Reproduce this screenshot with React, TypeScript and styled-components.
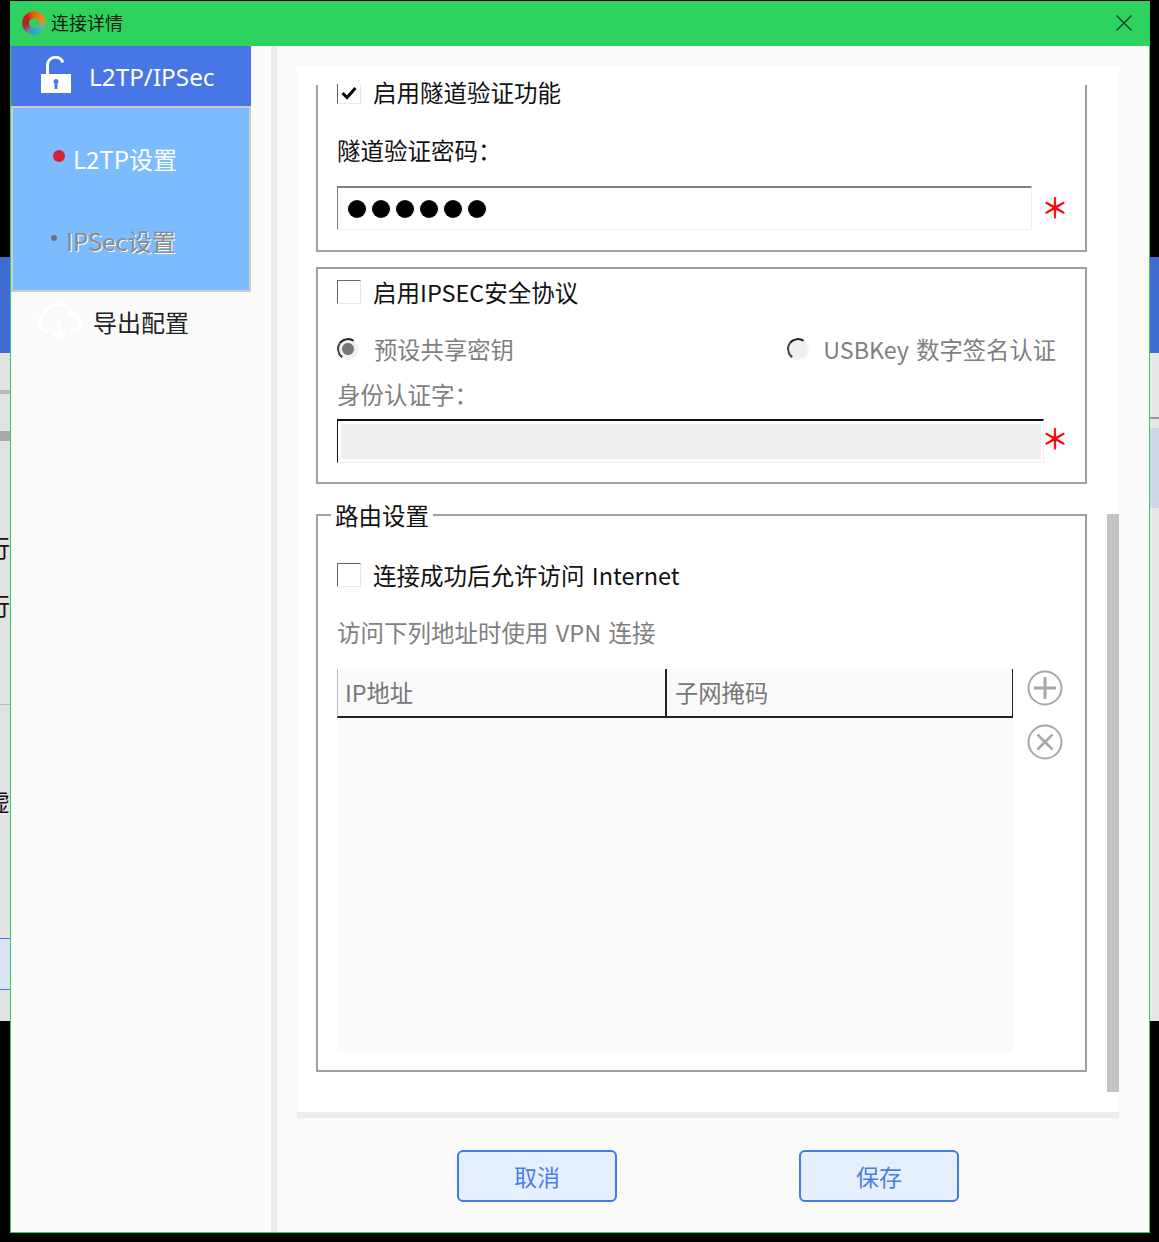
import React from 'react'
import styled, { createGlobalStyle } from 'styled-components'

const GlobalStyle = createGlobalStyle`
  html, body {
    margin: 0;
    padding: 0;
    background: #000;
  }
  body {
    font-family: "Noto Sans CJK SC", "Noto Sans", sans-serif;
    color: #111;
  }
`

const Page = styled.div`
  position: relative;
  width: 1159px;
  height: 1242px;
  overflow: hidden;
  padding: 1px 9px 9px 10px;
  box-sizing: border-box;
`

// the desktop that shows either side of the dialog
const Desktop = styled.div`
  position: absolute;
  inset: 0;
  display: flex;
  flex-direction: column;
`

const DesktopGap = styled.div`
  height: 257px;
  background: #000;
`

const DesktopBanner = styled.div`
  height: 96px;
  background: #3f6bd0;
`

const DesktopList = styled.div`
  height: 668px;
  background: linear-gradient(90deg, #e2e2e2, #f4f4f4 50%, #f4f4f4 96%, #e6e6e6 100%);
  position: relative;
`

const DesktopRule = styled.div<{ $side: 'left' | 'right'; $top: number; $h?: number; $color?: string }>`
  position: absolute;
  ${({ $side }) => $side}: 0;
  width: 12px;
  top: ${({ $top }) => $top}px;
  height: ${({ $h }) => $h ?? 1}px;
  background: ${({ $color }) => $color ?? '#b8b8b8'};
`

const DesktopGlyph = styled.span<{ $top: number }>`
  position: absolute;
  left: -14px;
  top: ${({ $top }) => $top}px;
  font-size: 24px;
  line-height: 24px;
  color: #111;
`

const Window = styled.div`
  position: relative;
  width: 1140px;
  height: 1232px;
  background: #fafafa;
  border: 1px solid #2ed35f;
  border-top: none;
  box-sizing: border-box;
  display: flex;
  flex-direction: column;
`

const TitleBar = styled.header`
  height: 45px;
  flex: none;
  box-sizing: border-box;
  background: #2ed35f;
  display: flex;
  align-items: center;
  padding: 0 17px 1px 12px;
  gap: 5px;
  margin: 0 -1px;
`

const Logo = styled.span`
  width: 24px;
  height: 24px;
  flex: none;
  border-radius: 50%;
  background: conic-gradient(
    #e8620f 0deg,
    #ef8a1e 70deg,
    #62b69a 115deg,
    #27a6d4 175deg,
    #5d86b4 215deg,
    #b0262c 250deg,
    #c3201c 310deg,
    #e8620f 360deg
  );
  mask-image: radial-gradient(circle at 50% 50%, transparent 4.5px, #000 5.5px);
`

const TitleText = styled.span`
  flex: 1;
  font-size: 18px;
  line-height: 24px;
  margin-top: -2px;
  color: #0b1a10;
`

const CloseButton = styled.button`
  width: 18px;
  height: 18px;
  padding: 0;
  border: 0;
  background: none;
  display: flex;
`

const Main = styled.div`
  flex: 1;
  display: flex;
  min-height: 0;
`

const Sidebar = styled.nav`
  width: 260px;
  flex: none;
  border-right: 6px solid #ececec;
`

const SideHeader = styled.div`
  width: 240px;
  height: 60px;
  background: #4876e6;
  color: #fff;
  display: flex;
  align-items: center;
  gap: 18px;
  padding-left: 30px;
  box-sizing: border-box;
  font-size: 24.3px;
  font-family: "Noto Sans", sans-serif;
`

const LockWrap = styled.span`
  display: flex;
  margin-top: -2px;
`

const SubMenu = styled.div`
  width: 240px;
  height: 186px;
  border: 2px solid #cccccc;
  background: #7dbbff;
  box-sizing: border-box;
  display: flex;
  flex-direction: column;
  padding-top: 26px;
  gap: 34px;
`

const SubItem = styled.div<{ $active?: boolean }>`
  height: 48px;
  display: flex;
  align-items: center;
  gap: ${({ $active }) => ($active ? 8 : 9)}px;
  padding-left: ${({ $active }) => ($active ? 40 : 38)}px;
  color: ${({ $active }) => ($active ? '#fff' : '#8c8c8c')};
  font-size: 24px;
  text-shadow: ${({ $active }) => ($active ? 'none' : '1px 1px 0 #fff')};
`

const Bullet = styled.span<{ $active?: boolean }>`
  width: ${({ $active }) => ($active ? 12 : 6)}px;
  height: ${({ $active }) => ($active ? 12 : 6)}px;
  border-radius: 50%;
  background: ${({ $active }) => ($active ? '#d4213a' : '#6e7280')};
  margin-top: -4px;
`

const ExportRow = styled.div`
  height: 58px;
  display: flex;
  align-items: center;
  gap: 10px;
  padding-left: 24px;
  font-size: 24px;
  color: #222;
`

const Content = styled.div`
  flex: 1;
  display: flex;
  flex-direction: column;
  padding: 20px 30px 0 20px;
  min-width: 0;
`

const ScrollArea = styled.div`
  position: relative;
  height: 1052px;
  flex: none;
  box-sizing: border-box;
  background: #fff;
  border-bottom: 6px solid #ececec;
  padding: 19px 32px 0 19px;
  display: flex;
  flex-direction: column;
  gap: 15px;
`

const ScrollThumb = styled.div`
  position: absolute;
  right: 0;
  top: 448px;
  width: 12px;
  height: 578px;
  background: #c4c4c4;
`

const Group = styled.fieldset<{ $clipped?: boolean; $h: number }>`
  margin: 0;
  padding: 0 19px;
  min-width: 0;
  height: ${({ $h }) => $h}px;
  box-sizing: border-box;
  border: 2px solid #a0a0a0;
  border-top: ${({ $clipped }) => ($clipped ? 'none' : '2px solid #a0a0a0')};
`

const GroupTitle = styled.legend`
  font-size: 23.5px;
  line-height: 32px;
  padding: 0 4px;
  margin-left: -6px;
  color: #111;
`

const CheckRow = styled.label<{ $mt?: number }>`
  display: flex;
  align-items: center;
  gap: 12px;
  margin-top: ${({ $mt }) => $mt ?? 0}px;
  font-size: 23.5px;
  line-height: 30px;
  word-spacing: 2px;
  color: #111;
`

const CheckBox = styled.span<{ $clipped?: boolean }>`
  width: 24px;
  height: ${({ $clipped }) => ($clipped ? 20 : 24)}px;
  margin-top: ${({ $clipped }) => ($clipped ? 3 : 0)}px;
  box-sizing: border-box;
  background: #fff;
  border: 1px solid #e8e8e8;
  border-left: 1px solid #666;
  border-top: ${({ $clipped }) => ($clipped ? 'none' : '1px solid #666')};
  display: flex;
  align-items: center;
  justify-content: center;
  flex: none;
`

const FieldLabel = styled.div<{ $muted?: boolean; $mt: number }>`
  margin-top: ${({ $mt }) => $mt}px;
  font-size: 23.5px;
  line-height: 30px;
  word-spacing: 2px;
  color: ${({ $muted }) => ($muted ? '#7f7f7f' : '#111')};
`

const InputRow = styled.div<{ $mt: number }>`
  display: flex;
  align-items: center;
  justify-content: space-between;
  margin-top: ${({ $mt }) => $mt}px;
`

const TextBox = styled.div<{ $disabled?: boolean; $w: number }>`
  width: ${({ $w }) => $w}px;
  height: 44px;
  flex: none;
  box-sizing: border-box;
  border: 1px solid #efefef;
  border-top: 2px solid ${({ $disabled }) => ($disabled ? '#111' : '#808080')};
  border-left: 1px solid ${({ $disabled }) => ($disabled ? '#111' : '#808080')};
  background: #fff;
  display: flex;
  align-items: center;
  gap: 6px;
  padding: ${({ $disabled }) => ($disabled ? '3px 2px 3px 3px' : '0 0 0 10px')};
`

const DisabledFill = styled.div`
  flex: 1;
  height: 100%;
  background: #efefef;
`

const Dot = styled.span`
  width: 18px;
  height: 18px;
  border-radius: 50%;
  background: #000;
  flex: none;
`

const Required = styled.span<{ $lift: number }>`
  flex: none;
  width: 28px;
  margin: -${({ $lift }) => $lift}px -3px 0 -3px;
  text-align: center;
  font-family: "Noto Sans CJK SC", sans-serif;
  font-size: 28px;
  font-weight: 500;
  line-height: 44px;
  height: 44px;
  color: #f00;
`

const RadioRow = styled.div`
  display: flex;
  justify-content: space-between;
  margin-top: 27px;
  padding-right: 10px;
`

const RadioItem = styled.div<{ $gap: number }>`
  display: flex;
  align-items: center;
  gap: ${({ $gap }) => $gap}px;
  font-size: 23.3px;
  line-height: 30px;
  word-spacing: 2px;
  color: #7f7f7f;
`

const Radio = styled.span<{ $checked?: boolean }>`
  position: relative;
  width: 22px;
  height: 22px;
  box-sizing: border-box;
  border-radius: 50%;
  background: #efefef;
  border: 2px solid #f3f3f3;
  border-top-color: #222;
  border-left-color: #444;
  transform: rotate(-10deg);
  flex: none;

  &::after {
    content: '';
    display: ${({ $checked }) => ($checked ? 'block' : 'none')};
    position: absolute;
    left: 3px;
    top: 3px;
    width: 12px;
    height: 12px;
    border-radius: 50%;
    background: #777;
  }
`

const TableRow = styled.div`
  display: flex;
  gap: 14px;
  margin-top: 22px;
`

const Table = styled.div`
  width: 676px;
  height: 383px;
  background: #fafafa;
  flex: none;
`

const TableHead = styled.div`
  display: flex;
  height: 49px;
  box-sizing: border-box;
  border-bottom: 2px solid #222;
  border-right: 1px solid #222;
  border-left: 1px solid #bbb;
`

const HeadCell = styled.div<{ $w?: number; $pad: number }>`
  width: ${({ $w }) => ($w ? `${$w}px` : 'auto')};
  flex: ${({ $w }) => ($w ? 'none' : 1)};
  box-sizing: border-box;
  padding-left: ${({ $pad }) => $pad}px;
  font-size: 23.3px;
  line-height: 46px;
  color: #777;
  border-right: ${({ $w }) => ($w ? '2px solid #222' : 'none')};
`

const RowTools = styled.div`
  display: flex;
  flex-direction: column;
  gap: 18px;
  padding-top: 1px;
`

const Footer = styled.div`
  flex: 1;
  display: flex;
  gap: 182px;
  justify-content: center;
  padding: 32px 0 0 0;
`

const FooterButton = styled.button`
  width: 160px;
  height: 52px;
  border: 2px solid #4279e6;
  border-radius: 6px;
  background: #e6effd;
  color: #4a7ee8;
  font-family: inherit;
  font-size: 23px;
  padding: 0;
`

const CloseIcon = () => (
  <svg width="18" height="18" viewBox="0 0 18 18">
    <path d="M1.500 1.500l15 15M16.500 1.500l-15 15" stroke="#0e3a1e" strokeWidth="1.300" fill="none" />
  </svg>
)

const LockIcon = () => (
  <svg width="30" height="38" viewBox="0 0 30 38">
    <path d="M6.500 18V9a8 8 0 0 1 15.500-2.500" stroke="#fff" strokeWidth="3" fill="none" />
    <path d="M0 18h30v19H0z" fill="#fff" />
    <path d="M15 23a2.500 2.500 0 0 1 1.500 4.500V33h-3v-5.500A2.500 2.500 0 0 1 15 23z" fill="#4876e6" />
  </svg>
)

const CloudIcon = () => (
  <svg width="48" height="40" viewBox="0 0 48 40">
    <path
      d="M13 30H11a9 9 0 0 1-1-17 13 13 0 0 1 25-1 9 9 0 0 1 2 18h-3M24 19v17M18 31l6 6 6-6"
      stroke="#fff"
      strokeWidth="3.500"
      fill="none"
    />
  </svg>
)

const CheckMark = () => (
  <svg width="16" height="14" viewBox="0 0 16 14">
    <path d="M1.500 7l4.500 4.500L14.500 2" stroke="#000" strokeWidth="3" fill="none" />
  </svg>
)

const PlusCircle = () => (
  <svg width="36" height="36" viewBox="0 0 36 36">
    <circle cx="18" cy="18" r="16.500" stroke="#a8a8a8" strokeWidth="2" fill="none" />
    <path d="M18 7v22M7 18h22" stroke="#a8a8a8" strokeWidth="3" fill="none" />
  </svg>
)

const CrossCircle = () => (
  <svg width="36" height="36" viewBox="0 0 36 36">
    <circle cx="18" cy="18" r="16.500" stroke="#a8a8a8" strokeWidth="2" fill="none" />
    <path d="M10.500 10.500l15 15M25.500 10.500l-15 15" stroke="#a8a8a8" strokeWidth="2.500" fill="none" />
  </svg>
)

export default function App() {
  const dots = [0, 1, 2, 3, 4, 5]

  return (
    <Page>
      <GlobalStyle />
      <Desktop>
        <DesktopGap />
        <DesktopBanner />
        <DesktopList>
          <DesktopRule $side="left" $top={37} $h={4} />
          <DesktopRule $side="left" $top={78} $h={10} $color="#a8a8a8" />
          <DesktopRule $side="left" $top={351} />
          <DesktopRule $side="left" $top={585} $h={52} $color="#dbe3f5" />
          <DesktopRule $side="left" $top={585} $color="#4876e6" />
          <DesktopRule $side="left" $top={636} $color="#4876e6" />
          <DesktopRule $side="right" $top={64} $h={2} $color="#9a9a9a" />
          <DesktopRule $side="right" $top={75} $h={80} $color="#cfd6e8" />
          <DesktopGlyph $top={182}>行</DesktopGlyph>
          <DesktopGlyph $top={240}>行</DesktopGlyph>
          <DesktopGlyph $top={436}>虚</DesktopGlyph>
        </DesktopList>
      </Desktop>

      <Window>
        <TitleBar>
          <Logo />
          <TitleText>连接详情</TitleText>
          <CloseButton>
            <CloseIcon />
          </CloseButton>
        </TitleBar>

        <Main>
          <Sidebar>
            <SideHeader>
              <LockWrap>
                <LockIcon />
              </LockWrap>
              L2TP/IPSec
            </SideHeader>
            <SubMenu>
              <SubItem $active>
                <Bullet $active />
                L2TP设置
              </SubItem>
              <SubItem>
                <Bullet />
                IPSec设置
              </SubItem>
            </SubMenu>
            <ExportRow>
              <CloudIcon />
              导出配置
            </ExportRow>
          </Sidebar>

          <Content>
            <ScrollArea>
              <Group $clipped $h={167}>
                <CheckRow $mt={-8}>
                  <CheckBox $clipped>
                    <CheckMark />
                  </CheckBox>
                  启用隧道验证功能
                </CheckRow>
                <FieldLabel $mt={28}>隧道验证密码：</FieldLabel>
                <InputRow $mt={21}>
                  <TextBox $w={695}>
                    {dots.map((d) => (
                      <Dot key={d} />
                    ))}
                  </TextBox>
                  <Required $lift={2}>＊</Required>
                </InputRow>
              </Group>

              <Group $h={217}>
                <CheckRow $mt={8}>
                  <CheckBox />
                  启用IPSEC安全协议
                </CheckRow>
                <RadioRow>
                  <RadioItem $gap={15}>
                    <Radio $checked />
                    预设共享密钥
                  </RadioItem>
                  <RadioItem $gap={14}>
                    <Radio />
                    USBKey 数字签名认证
                  </RadioItem>
                </RadioRow>
                <FieldLabel $muted $mt={15}>
                  身份认证字：
                </FieldLabel>
                <InputRow $mt={10}>
                  <TextBox $disabled $w={707}>
                    <DisabledFill />
                  </TextBox>
                  <Required $lift={6}>＊</Required>
                </InputRow>
              </Group>

              <Group $h={573}>
                <GroupTitle>路由设置</GroupTitle>
                <CheckRow $mt={29}>
                  <CheckBox />
                  连接成功后允许访问 Internet
                </CheckRow>
                <FieldLabel $muted $mt={27}>
                  访问下列地址时使用 VPN 连接
                </FieldLabel>
                <TableRow>
                  <Table>
                    <TableHead>
                      <HeadCell $w={329} $pad={7}>
                        IP地址
                      </HeadCell>
                      <HeadCell $pad={8}>子网掩码</HeadCell>
                    </TableHead>
                  </Table>
                  <RowTools>
                    <PlusCircle />
                    <CrossCircle />
                  </RowTools>
                </TableRow>
              </Group>
              <ScrollThumb />
            </ScrollArea>

            <Footer>
              <FooterButton>取消</FooterButton>
              <FooterButton>保存</FooterButton>
            </Footer>
          </Content>
        </Main>
      </Window>
    </Page>
  )
}
